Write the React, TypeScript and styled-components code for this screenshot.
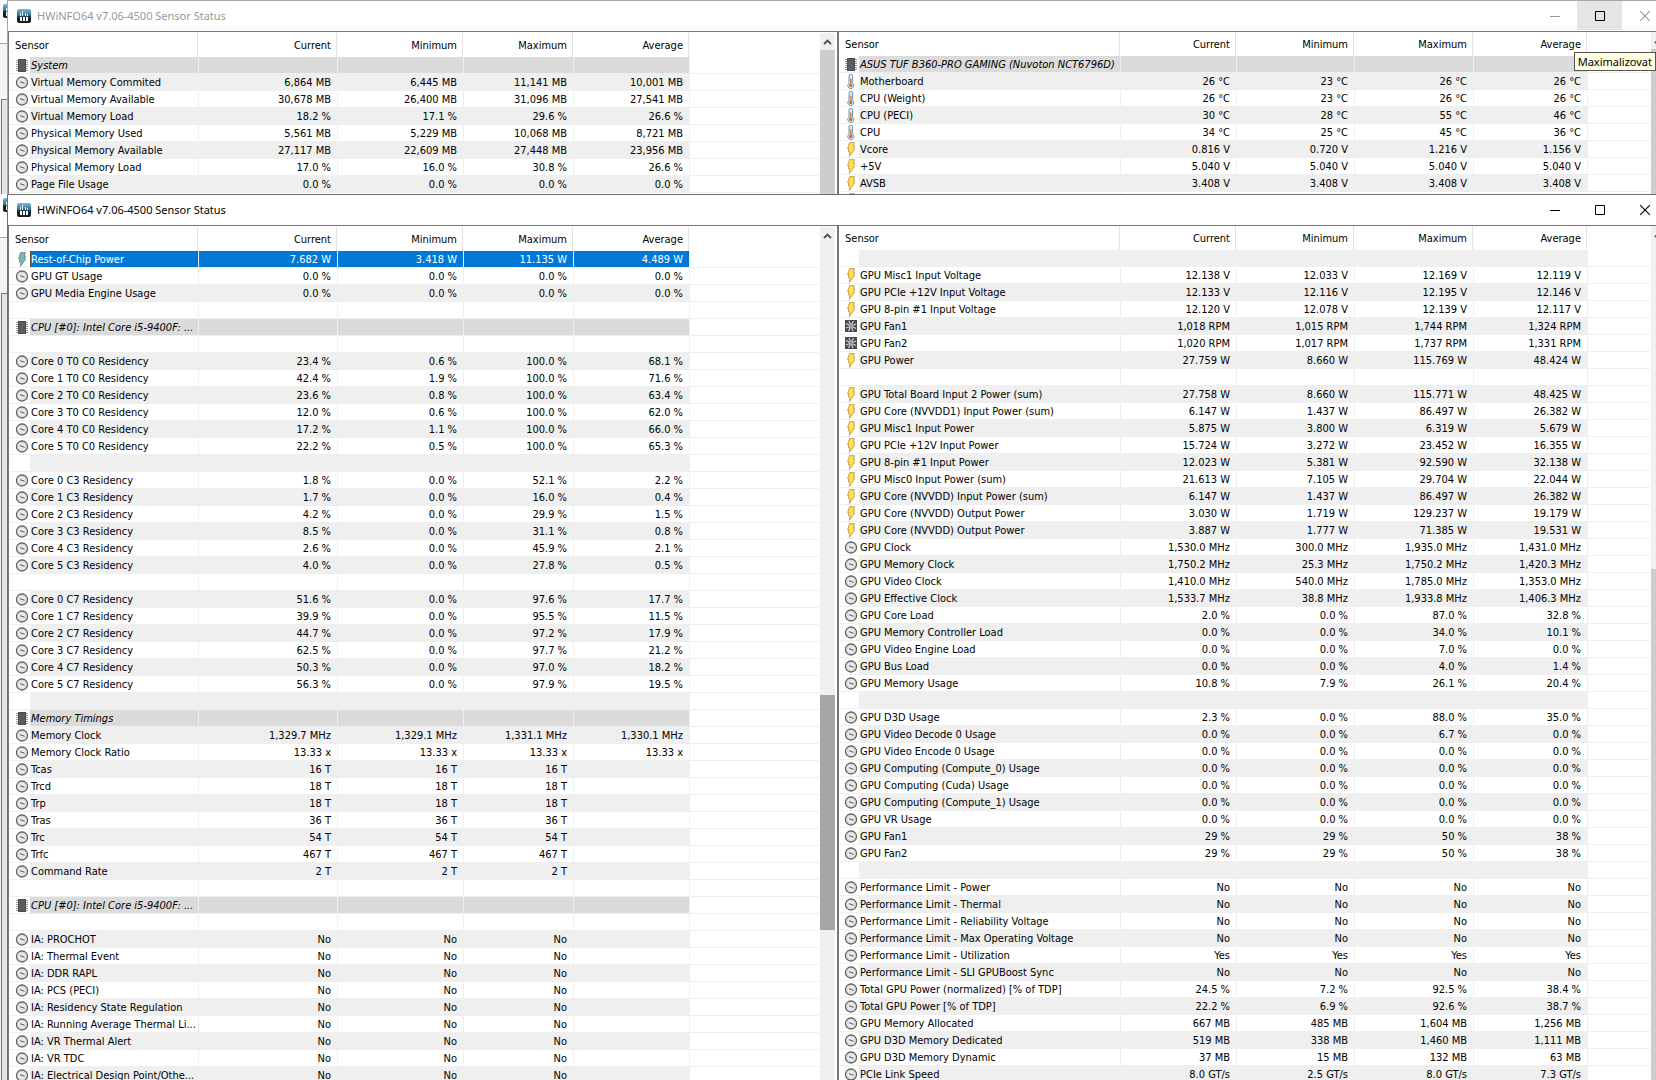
import React from "react";
import styled, { createGlobalStyle, css } from "styled-components";

const GlobalStyle = createGlobalStyle`
  * { box-sizing: border-box; }
  html, body { margin: 0; padding: 0; background: #fff; }
  body { font-family: "DejaVu Sans Condensed", "DejaVu Sans", sans-serif; font-size: 11px; color: #000; }
`;

/* ---------- data ---------- */

type IconKind = "clock" | "chip" | "temp" | "bolt" | "power" | "fan" | "none";
type Row = { icon: IconKind; name: string; values: string[]; group?: boolean; selected?: boolean };

const r = (icon: IconKind, name: string, ...values: string[]): Row => ({ icon, name, values });
const group = (name: string): Row => ({ icon: "chip", name, values: [], group: true });
const blank = (): Row => ({ icon: "none", name: "", values: [] });
const timing = (name: string, v: string): Row => r("clock", name, v, v, v);
const flag = (name: string): Row => r("clock", name, "No", "No", "No");
const limit = (name: string, v: string): Row => r("clock", `Performance Limit - ${name}`, v, v, v, v);

const memoryRows: Row[] = [
  group("System"),
  r("clock", "Virtual Memory Commited", "6,864 MB", "6,445 MB", "11,141 MB", "10,001 MB"),
  r("clock", "Virtual Memory Available", "30,678 MB", "26,400 MB", "31,096 MB", "27,541 MB"),
  r("clock", "Virtual Memory Load", "18.2 %", "17.1 %", "29.6 %", "26.6 %"),
  r("clock", "Physical Memory Used", "5,561 MB", "5,229 MB", "10,068 MB", "8,721 MB"),
  r("clock", "Physical Memory Available", "27,117 MB", "22,609 MB", "27,448 MB", "23,956 MB"),
  r("clock", "Physical Memory Load", "17.0 %", "16.0 %", "30.8 %", "26.6 %"),
  r("clock", "Page File Usage", "0.0 %", "0.0 %", "0.0 %", "0.0 %"),
];

const boardRows: Row[] = [
  group("ASUS TUF B360-PRO GAMING (Nuvoton NCT6796D)"),
  r("temp", "Motherboard", "26 °C", "23 °C", "26 °C", "26 °C"),
  r("temp", "CPU (Weight)", "26 °C", "23 °C", "26 °C", "26 °C"),
  r("temp", "CPU (PECI)", "30 °C", "28 °C", "55 °C", "46 °C"),
  r("temp", "CPU", "34 °C", "25 °C", "45 °C", "36 °C"),
  r("bolt", "Vcore", "0.816 V", "0.720 V", "1.216 V", "1.156 V"),
  r("bolt", "+5V", "5.040 V", "5.040 V", "5.040 V", "5.040 V"),
  r("bolt", "AVSB", "3.408 V", "3.408 V", "3.408 V", "3.408 V"),
  r("bolt", ""),
];

const cpuRows: Row[] = [
  { ...r("power", "Rest-of-Chip Power", "7.682 W", "3.418 W", "11.135 W", "4.489 W"), selected: true },
  r("clock", "GPU GT Usage", "0.0 %", "0.0 %", "0.0 %", "0.0 %"),
  r("clock", "GPU Media Engine Usage", "0.0 %", "0.0 %", "0.0 %", "0.0 %"),
  blank(),
  group("CPU [#0]: Intel Core i5-9400F: ..."),
  blank(),
  r("clock", "Core 0 T0 C0 Residency", "23.4 %", "0.6 %", "100.0 %", "68.1 %"),
  r("clock", "Core 1 T0 C0 Residency", "42.4 %", "1.9 %", "100.0 %", "71.6 %"),
  r("clock", "Core 2 T0 C0 Residency", "23.6 %", "0.8 %", "100.0 %", "63.4 %"),
  r("clock", "Core 3 T0 C0 Residency", "12.0 %", "0.6 %", "100.0 %", "62.0 %"),
  r("clock", "Core 4 T0 C0 Residency", "17.2 %", "1.1 %", "100.0 %", "66.0 %"),
  r("clock", "Core 5 T0 C0 Residency", "22.2 %", "0.5 %", "100.0 %", "65.3 %"),
  blank(),
  r("clock", "Core 0 C3 Residency", "1.8 %", "0.0 %", "52.1 %", "2.2 %"),
  r("clock", "Core 1 C3 Residency", "1.7 %", "0.0 %", "16.0 %", "0.4 %"),
  r("clock", "Core 2 C3 Residency", "4.2 %", "0.0 %", "29.9 %", "1.5 %"),
  r("clock", "Core 3 C3 Residency", "8.5 %", "0.0 %", "31.1 %", "0.8 %"),
  r("clock", "Core 4 C3 Residency", "2.6 %", "0.0 %", "45.9 %", "2.1 %"),
  r("clock", "Core 5 C3 Residency", "4.0 %", "0.0 %", "27.8 %", "0.5 %"),
  blank(),
  r("clock", "Core 0 C7 Residency", "51.6 %", "0.0 %", "97.6 %", "17.7 %"),
  r("clock", "Core 1 C7 Residency", "39.9 %", "0.0 %", "95.5 %", "11.5 %"),
  r("clock", "Core 2 C7 Residency", "44.7 %", "0.0 %", "97.2 %", "17.9 %"),
  r("clock", "Core 3 C7 Residency", "62.5 %", "0.0 %", "97.7 %", "21.2 %"),
  r("clock", "Core 4 C7 Residency", "50.3 %", "0.0 %", "97.0 %", "18.2 %"),
  r("clock", "Core 5 C7 Residency", "56.3 %", "0.0 %", "97.9 %", "19.5 %"),
  blank(),
  group("Memory Timings"),
  r("clock", "Memory Clock", "1,329.7 MHz", "1,329.1 MHz", "1,331.1 MHz", "1,330.1 MHz"),
  r("clock", "Memory Clock Ratio", "13.33 x", "13.33 x", "13.33 x", "13.33 x"),
  timing("Tcas", "16 T"),
  timing("Trcd", "18 T"),
  timing("Trp", "18 T"),
  timing("Tras", "36 T"),
  timing("Trc", "54 T"),
  timing("Trfc", "467 T"),
  timing("Command Rate", "2 T"),
  blank(),
  group("CPU [#0]: Intel Core i5-9400F: ..."),
  blank(),
  flag("IA: PROCHOT"),
  flag("IA: Thermal Event"),
  flag("IA: DDR RAPL"),
  flag("IA: PCS (PECI)"),
  flag("IA: Residency State Regulation"),
  flag("IA: Running Average Thermal Li..."),
  flag("IA: VR Thermal Alert"),
  flag("IA: VR TDC"),
  flag("IA: Electrical Design Point/Othe..."),
];

const gpuRows: Row[] = [
  blank(),
  r("bolt", "GPU Misc1 Input Voltage", "12.138 V", "12.033 V", "12.169 V", "12.119 V"),
  r("bolt", "GPU PCIe +12V Input Voltage", "12.133 V", "12.116 V", "12.195 V", "12.146 V"),
  r("bolt", "GPU 8-pin #1 Input Voltage", "12.120 V", "12.078 V", "12.139 V", "12.117 V"),
  r("fan", "GPU Fan1", "1,018 RPM", "1,015 RPM", "1,744 RPM", "1,324 RPM"),
  r("fan", "GPU Fan2", "1,020 RPM", "1,017 RPM", "1,737 RPM", "1,331 RPM"),
  r("bolt", "GPU Power", "27.759 W", "8.660 W", "115.769 W", "48.424 W"),
  blank(),
  r("bolt", "GPU Total Board Input 2 Power (sum)", "27.758 W", "8.660 W", "115.771 W", "48.425 W"),
  r("bolt", "GPU Core (NVVDD1) Input Power (sum)", "6.147 W", "1.437 W", "86.497 W", "26.382 W"),
  r("bolt", "GPU Misc1 Input Power", "5.875 W", "3.800 W", "6.319 W", "5.679 W"),
  r("bolt", "GPU PCIe +12V Input Power", "15.724 W", "3.272 W", "23.452 W", "16.355 W"),
  r("bolt", "GPU 8-pin #1 Input Power", "12.023 W", "5.381 W", "92.590 W", "32.138 W"),
  r("bolt", "GPU Misc0 Input Power (sum)", "21.613 W", "7.105 W", "29.704 W", "22.044 W"),
  r("bolt", "GPU Core (NVVDD) Input Power (sum)", "6.147 W", "1.437 W", "86.497 W", "26.382 W"),
  r("bolt", "GPU Core (NVVDD) Output Power", "3.030 W", "1.719 W", "129.237 W", "19.179 W"),
  r("bolt", "GPU Core (NVVDD) Output Power", "3.887 W", "1.777 W", "71.385 W", "19.531 W"),
  r("clock", "GPU Clock", "1,530.0 MHz", "300.0 MHz", "1,935.0 MHz", "1,431.0 MHz"),
  r("clock", "GPU Memory Clock", "1,750.2 MHz", "25.3 MHz", "1,750.2 MHz", "1,420.3 MHz"),
  r("clock", "GPU Video Clock", "1,410.0 MHz", "540.0 MHz", "1,785.0 MHz", "1,353.0 MHz"),
  r("clock", "GPU Effective Clock", "1,533.7 MHz", "38.8 MHz", "1,933.8 MHz", "1,406.3 MHz"),
  r("clock", "GPU Core Load", "2.0 %", "0.0 %", "87.0 %", "32.8 %"),
  r("clock", "GPU Memory Controller Load", "0.0 %", "0.0 %", "34.0 %", "10.1 %"),
  r("clock", "GPU Video Engine Load", "0.0 %", "0.0 %", "7.0 %", "0.0 %"),
  r("clock", "GPU Bus Load", "0.0 %", "0.0 %", "4.0 %", "1.4 %"),
  r("clock", "GPU Memory Usage", "10.8 %", "7.9 %", "26.1 %", "20.4 %"),
  blank(),
  r("clock", "GPU D3D Usage", "2.3 %", "0.0 %", "88.0 %", "35.0 %"),
  r("clock", "GPU Video Decode 0 Usage", "0.0 %", "0.0 %", "6.7 %", "0.0 %"),
  r("clock", "GPU Video Encode 0 Usage", "0.0 %", "0.0 %", "0.0 %", "0.0 %"),
  r("clock", "GPU Computing (Compute_0) Usage", "0.0 %", "0.0 %", "0.0 %", "0.0 %"),
  r("clock", "GPU Computing (Cuda) Usage", "0.0 %", "0.0 %", "0.0 %", "0.0 %"),
  r("clock", "GPU Computing (Compute_1) Usage", "0.0 %", "0.0 %", "0.0 %", "0.0 %"),
  r("clock", "GPU VR Usage", "0.0 %", "0.0 %", "0.0 %", "0.0 %"),
  r("clock", "GPU Fan1", "29 %", "29 %", "50 %", "38 %"),
  r("clock", "GPU Fan2", "29 %", "29 %", "50 %", "38 %"),
  blank(),
  limit("Power", "No"),
  limit("Thermal", "No"),
  limit("Reliability Voltage", "No"),
  limit("Max Operating Voltage", "No"),
  limit("Utilization", "Yes"),
  limit("SLI GPUBoost Sync", "No"),
  r("clock", "Total GPU Power (normalized) [% of TDP]", "24.5 %", "7.2 %", "92.5 %", "38.4 %"),
  r("clock", "Total GPU Power [% of TDP]", "22.2 %", "6.9 %", "92.6 %", "38.7 %"),
  r("clock", "GPU Memory Allocated", "667 MB", "485 MB", "1,604 MB", "1,256 MB"),
  r("clock", "GPU D3D Memory Dedicated", "519 MB", "338 MB", "1,460 MB", "1,111 MB"),
  r("clock", "GPU D3D Memory Dynamic", "37 MB", "15 MB", "132 MB", "63 MB"),
  r("clock", "PCIe Link Speed", "8.0 GT/s", "2.5 GT/s", "8.0 GT/s", "7.3 GT/s"),
];

const leftColumns = [189, 139, 126, 110, 116];
const rightColumns = [281, 116, 118, 119, 114];

/* ---------- icons ---------- */

const Glyph = styled.svg`
  display: block;
  flex: none;
`;

function SensorIcon({ kind }: { kind: IconKind }) {
  if (kind === "none") return null;
  return (
    <Glyph width="14" height="15" viewBox="0 0 14 15" aria-hidden="true">
      {kind === "clock" && (
        <>
          <circle cx="7" cy="7.5" r="5.5" fill="#e9e9e9" stroke="#5c5c5c" strokeWidth="1.3" />
          <circle cx="7" cy="7.5" r="4.3" fill="none" stroke="#cfcfcf" strokeWidth="0.8" />
          <path d="M5 6.7L9.6 8.3" fill="none" stroke="#555" strokeWidth="1" />
        </>
      )}
      {kind === "chip" && (
        <>
          <path d="M1 2.5h12M1 4.5h12M1 6.5h12M1 8.5h12M1 10.5h12M1 12.5h12" stroke="#9a9a9a" strokeWidth="1" />
          <rect x="3" y="1" width="8" height="13" fill="#4b4c4f" />
          <rect x="4" y="2" width="6" height="11" fill="#5b5c60" />
        </>
      )}
      {kind === "temp" && (
        <>
          <path
            d="M5 2a1.8 1.8 0 0 1 3.6 0v7.2a3 3 0 1 1-3.6 0z"
            fill="#e6eef4"
            stroke="#6f96b5"
            strokeWidth="1"
          />
          <rect x="6" y="4.5" width="1.6" height="7" fill="#d58a4c" />
          <circle cx="6.8" cy="11.5" r="1.7" fill="#cd6a30" />
        </>
      )}
      {(kind === "bolt" || kind === "power") && (
        <path
          d="M5.6 0.6h4.8l-0.9 3.4h1l-0.8 3.6h0.7L5.4 14.4l0.5-4.6H4.3l0.6-3.3H3.6z"
          fill={kind === "bolt" ? "#ffe24a" : "#7fb7b0"}
          stroke={kind === "bolt" ? "#c07c34" : "#4c7c8c"}
          strokeWidth="0.7"
          strokeLinejoin="round"
        />
      )}
      {kind === "fan" && (
        <>
          <rect x="1" y="1" width="12" height="12" fill="#4a4a4c" />
          <path
            d="M7 7L5 2M7 7L9.5 2M7 7L12 5M7 7L12 9.5M7 7L9 12M7 7L4.5 12M7 7L2 9M7 7L2 4.5"
            stroke="#d4d4d6"
            strokeWidth="1.2"
          />
          <circle cx="7" cy="7" r="1.5" fill="#9a8585" />
        </>
      )}
    </Glyph>
  );
}

function Logo() {
  return (
    <Glyph width="14" height="14" viewBox="0 0 14 14" aria-hidden="true">
      <defs>
        <linearGradient id="logoFill" x1="0" y1="0" x2="0" y2="1">
          <stop offset="0" stopColor="#7db8d6" />
          <stop offset="0.45" stopColor="#2f6f98" />
          <stop offset="0.6" stopColor="#14212b" />
          <stop offset="1" stopColor="#1d1d1f" />
        </linearGradient>
      </defs>
      <rect width="14" height="14" rx="2" fill="url(#logoFill)" />
      <path d="M3 4h1v3H3zM5 2h1v5H5zM8 4h1v3H8zM10 5h1v2h-1z" fill="#e9f4fa" />
      <path d="M3 8h2v4H3zM6 8h2v4H6zM9 8h2v4H9z" fill="#fff" />
    </Glyph>
  );
}

/* ---------- desktop ---------- */

const Desktop = styled.div`
  display: flex;
  flex-direction: column;
  height: 100vh;
  overflow: hidden;
`;

const Layer = styled.section<{ $height?: number }>`
  position: relative;
  display: flex;
  min-height: 0;
  overflow: hidden;
  flex: ${(p) => (p.$height ? `0 0 ${p.$height}px` : "1 1 0")};
`;

const BackWindow = styled.div`
  flex: 0 0 7px;
  display: flex;
  flex-direction: column;
  overflow: hidden;
  background: #f4f4f4;
`;

const BackTitle = styled.div`
  height: 44px;
  padding: 4px 0 0 3px;
  background: #fbfbfb;
  border-bottom: 1px solid #a6a6a6;
`;

const BackBar = styled.div`
  height: 55px;
`;

const BackBody = styled.div`
  flex: 1;
  margin-left: 1px;
  background: #e4e4e4;
  border-top: 1px solid #777;
  border-left: 1px solid #777;
`;

const Frame = styled.div<{ $active: boolean }>`
  flex: 1;
  min-width: 0;
  margin-right: -11px;
  display: flex;
  flex-direction: column;
  background: #fff;
  border: 0 solid ${(p) => (p.$active ? "#6f6f6f" : "#a8a8a8")};
  border-width: 1px 0 0 1px;
`;

const TitleBar = styled.header<{ $active: boolean }>`
  flex: 0 0 30px;
  display: flex;
  align-items: center;
  padding-left: 9px;
  color: ${(p) => (p.$active ? "#000" : "#999")};
`;

const Title = styled.h1`
  margin: 0;
  padding-left: 6px;
  flex: 1;
  font: 400 11px/16px "Noto Sans", "Open Sans", sans-serif;
`;

const CaptionButton = styled.button<{ $hover?: boolean }>`
  align-self: flex-start;
  width: 45px;
  height: 29px;
  padding: 0;
  border: 0;
  display: flex;
  align-items: center;
  justify-content: center;
  color: ${(p) => (p.$hover ? "#000" : "inherit")};
  background: ${(p) => (p.$hover ? "#e5e5e5" : "transparent")};
`;

const Body = styled.div`
  flex: 1;
  min-height: 0;
  display: grid;
  grid-template-columns: calc(50% - 1px) 1fr;
  grid-template-rows: minmax(0, 1fr);
  border: 0 solid #777;
  border-width: 1px 0 0 1px;
`;

const Pane = styled.div<{ $second?: boolean }>`
  display: flex;
  min-width: 0;
  overflow: hidden;
  ${(p) =>
    p.$second
      ? css`
          padding-right: 1px;
          border-left: 2px solid #777;
        `
      : css`
          padding: 1px 2px 0 0;
        `}
`;

const List = styled.div`
  flex: 1;
  min-width: 0;
  padding: 0 1px;
  overflow: hidden;
`;

const Table = styled.table`
  width: 100%;
  table-layout: fixed;
  border-collapse: separate;
  border-spacing: 0;
`;

const HeadCell = styled.th<{ $first?: boolean; $filler?: boolean }>`
  height: 24px;
  padding: ${(p) => (p.$first ? "2px 0 0 5px" : "2px 7px 0 0")};
  line-height: 22px;
  font-weight: 400;
  text-align: ${(p) => (p.$first ? "left" : "right")};
  white-space: nowrap;
  ${(p) =>
    !p.$filler &&
    css`
      background: linear-gradient(#e2e2e2, #e2e2e2) right 1px top / 1px 100% no-repeat;
    `}
`;

type Tone = "plain" | "shade" | "group" | "selected";

const toneColor: Record<Tone, string> = {
  plain: "#fff",
  shade: "#efefef",
  group: "#dbdbdb",
  selected: "#0078d7",
};

const cellBase = css`
  height: 17px;
  border-bottom: 1px solid #efefef;
  border-right: 1px solid #efefef;
  white-space: nowrap;
`;

const SensorCell = styled.th<{ $tone: Tone }>`
  ${cellBase}
  padding: 0;
  font-weight: 400;
  text-align: left;
  background: ${(p) => toneColor[p.$tone]};
  color: ${(p) => (p.$tone === "selected" ? "#fff" : "#000")};
  font-style: ${(p) => (p.$tone === "group" ? "italic" : "normal")};
`;

const SensorBox = styled.div`
  display: flex;
  height: 16px;
`;

const IconBox = styled.span<{ $narrow?: boolean }>`
  flex: 0 0 ${(p) => (p.$narrow ? 19 : 20)}px;
  padding: 1px 0 0 ${(p) => (p.$narrow ? 4 : 5)}px;
  background: #fff;
`;

const Name = styled.span<{ $selected: boolean }>`
  flex: 1;
  padding: 2px 0 0 1px;
  line-height: 14px;
  ${(p) =>
    p.$selected &&
    css`
      outline: 1px dotted #5c4a2a;
      outline-offset: -1px;
    `}
`;

const ValueCell = styled.td<{ $tone: Tone }>`
  ${cellBase}
  padding: 2px 6px 0 0;
  line-height: 14px;
  text-align: right;
  background: ${(p) => toneColor[p.$tone]};
  color: ${(p) => (p.$tone === "selected" ? "#fff" : "#000")};
`;

const FillerCell = styled.td`
  height: 17px;
  padding: 0;
  border-bottom: 1px solid #efefef;
`;

const ScrollBar = styled.div`
  flex: 0 0 15px;
  display: flex;
  flex-direction: column;
  background: #f0f0f0;
`;

const ScrollButton = styled.button`
  flex: 0 0 17px;
  padding: 0;
  border: 0;
  display: flex;
  align-items: center;
  justify-content: center;
  background: #f0f0f0;
`;

const Track = styled.div`
  flex: 1;
  min-height: 0;
`;

const Thumb = styled.div<{ $dark?: boolean }>`
  background: ${(p) => (p.$dark ? "#a6a6a6" : "#cdcdcd")};
`;

const Tooltip = styled.div`
  position: absolute;
  top: 52px;
  right: 0;
  padding: 0 3px;
  font: 11px/17px "Noto Sans", "Open Sans", sans-serif;
  background: #ffffe1;
  border: 1px solid #555;
`;

type Scroll = { start: number; size: number; dark?: boolean };

function SensorPane({
  rows,
  columns,
  shadeOdd,
  scroll,
  second,
}: {
  rows: Row[];
  columns: number[];
  shadeOdd?: boolean;
  scroll: Scroll;
  second?: boolean;
}) {
  return (
    <Pane $second={second}>
      <List>
        <Table>
          <colgroup>
            {columns.map((w, i) => (
              <col key={i} style={{ width: w }} />
            ))}
            <col />
          </colgroup>
          <thead>
            <tr>
              <HeadCell scope="col" $first>
                Sensor
              </HeadCell>
              <HeadCell scope="col">Current</HeadCell>
              <HeadCell scope="col">Minimum</HeadCell>
              <HeadCell scope="col">Maximum</HeadCell>
              <HeadCell scope="col">Average</HeadCell>
              <HeadCell as="td" $filler />
            </tr>
          </thead>
          <tbody>
            {rows.map((row, i) => {
              const shaded = i % 2 === (shadeOdd ? 1 : 0);
              const tone: Tone = row.selected ? "selected" : row.group ? "group" : shaded ? "shade" : "plain";
              return (
                <tr key={i}>
                  <SensorCell scope="row" $tone={tone}>
                    <SensorBox>
                      <IconBox $narrow={second}>
                        <SensorIcon kind={row.icon} />
                      </IconBox>
                      <Name $selected={!!row.selected}>{row.name}</Name>
                    </SensorBox>
                  </SensorCell>
                  {[0, 1, 2, 3].map((c) => (
                    <ValueCell key={c} $tone={tone}>
                      {row.values[c] ?? ""}
                    </ValueCell>
                  ))}
                  <FillerCell />
                </tr>
              );
            })}
          </tbody>
        </Table>
      </List>
      <ScrollBar>
        <ScrollButton aria-label="Scroll up">
          <Glyph width="9" height="6" viewBox="0 0 9 6">
            <path d="M1 5L4.5 1.5L8 5" fill="none" stroke="#505050" strokeWidth="1.8" />
          </Glyph>
        </ScrollButton>
        <Track>
          <div style={{ height: `${scroll.start}%` }} />
          <Thumb $dark={scroll.dark} style={{ height: `${scroll.size}%` }} />
        </Track>
      </ScrollBar>
    </Pane>
  );
}

function SensorWindow({
  active,
  height,
  hoverMaximize,
  children,
  tooltip,
}: {
  active: boolean;
  height?: number;
  hoverMaximize?: boolean;
  children: React.ReactNode;
  tooltip?: string;
}) {
  return (
    <Layer $height={height}>
      <BackWindow>
        <BackTitle>
          <Logo />
        </BackTitle>
        <BackBar />
        <BackBody />
      </BackWindow>
      <Frame $active={active}>
        <TitleBar $active={active}>
          <Logo />
          <Title>HWiNFO64 v7.06-4500 Sensor Status</Title>
          <CaptionButton aria-label="Minimize">
            <Glyph width="10" height="10" viewBox="0 0 10 10">
              <path d="M0 5.5h10" stroke="currentColor" />
            </Glyph>
          </CaptionButton>
          <CaptionButton aria-label="Maximize" $hover={hoverMaximize}>
            <Glyph width="10" height="10" viewBox="0 0 10 10">
              <path d="M0.5 0.5h9v9h-9z" fill="none" stroke="currentColor" />
            </Glyph>
          </CaptionButton>
          <CaptionButton aria-label="Close">
            <Glyph width="10" height="10" viewBox="0 0 10 10">
              <path d="M0 0L10 10M10 0L0 10" stroke="currentColor" strokeWidth="1.1" />
            </Glyph>
          </CaptionButton>
        </TitleBar>
        <Body>{children}</Body>
      </Frame>
      {tooltip && <Tooltip role="tooltip">{tooltip}</Tooltip>}
    </Layer>
  );
}

export default function App() {
  return (
    <>
      <GlobalStyle />
      <Desktop>
        <SensorWindow active={false} height={194} hoverMaximize tooltip="Maximalizovat">
          <SensorPane rows={memoryRows} columns={leftColumns} shadeOdd scroll={{ start: 0, size: 100 }} />
          <SensorPane rows={boardRows} columns={rightColumns} shadeOdd scroll={{ start: 0, size: 100 }} second />
        </SensorWindow>
        <SensorWindow active>
          <SensorPane rows={cpuRows} columns={leftColumns} scroll={{ start: 54, size: 28, dark: true }} />
          <SensorPane rows={gpuRows} columns={rightColumns} scroll={{ start: 39, size: 61 }} second />
        </SensorWindow>
      </Desktop>
    </>
  );
}
